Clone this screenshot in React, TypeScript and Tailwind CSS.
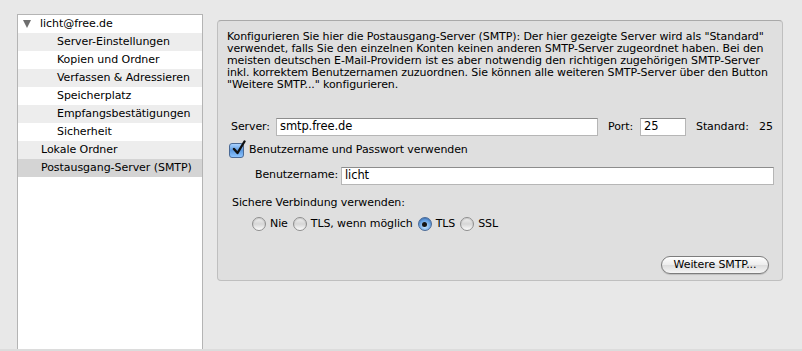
import React from "react";

const font = "font-['DejaVu_Sans','Liberation_Sans',sans-serif]";

const rows = [
  { label: "licht@free.de", level: 0, tree: true },
  { label: "Server-Einstellungen", level: 1 },
  { label: "Kopien und Ordner", level: 1 },
  { label: "Verfassen & Adressieren", level: 1 },
  { label: "Speicherplatz", level: 1 },
  { label: "Empfangsbestätigungen", level: 1 },
  { label: "Sicherheit", level: 1 },
  { label: "Lokale Ordner", level: 0 },
  { label: "Postausgang-Server (SMTP)", level: 0, selected: true },
];

const intro = [
  'Konfigurieren Sie hier die Postausgang-Server (SMTP): Der hier gezeigte Server wird als "Standard"',
  "verwendet, falls Sie den einzelnen Konten keinen anderen SMTP-Server zugeordnet haben. Bei den",
  "meisten deutschen E-Mail-Providern ist es aber notwendig den richtigen zugehörigen SMTP-Server",
  "inkl. korrektem Benutzernamen zuzuordnen. Sie können alle weiteren SMTP-Server über den Button",
  '"Weitere SMTP..." konfigurieren.',
];

function Sidebar() {
  return (
    <div className="ml-[17px] mt-[14px] flex w-[186px] flex-col border-x border-t border-[#b4b4b4] bg-white">
      {rows.map((r, i) => (
        <div
          key={r.label}
          className={
            "flex h-[18px] items-center whitespace-nowrap text-[11px] tracking-[-0.05px] text-black " +
            (r.selected ? "bg-[#d4d4d4] " : i % 2 === 1 ? "bg-[#ededed] " : "bg-white ") +
            (r.level === 1 ? "pl-[39px]" : "pl-[23px]")
          }
        >
          {r.tree && (
            <span className="-ml-[18px] mr-[9px] h-0 w-0 border-x-[4.5px] border-t-[8px] border-x-transparent border-t-[#6e6e6e]" />
          )}
          {r.label}
        </div>
      ))}
    </div>
  );
}

function TextInput({ value, className }: { value: string; className: string }) {
  return (
    <div
      className={
        "flex h-[18px] shrink-0 items-center border border-[#b6b6b6] border-t-[#8c8c8c] bg-white pl-[3px] text-[11.5px] text-black " +
        className
      }
    >
      {value}
    </div>
  );
}

function Radio({ checked, label }: { checked?: boolean; label: string }) {
  return (
    <div className="flex items-center gap-[4px]">
      <span
        className={
          "flex size-[14px] items-center justify-center rounded-full border shadow-[inset_0_1px_1px_rgba(0,0,0,0.15)] " +
          (checked
            ? "border-[#4a6a96] bg-[radial-gradient(circle_at_50%_70%,#c8e6ff,#6aa4e4_55%,#3a76c4)]"
            : "border-[#8e8e8e] bg-[linear-gradient(#f0f0f0,#d6d6d6_50%,#fcfcfc)]")
        }
      >
        {checked && <span className="size-[5px] rounded-full bg-[#151515]" />}
      </span>
      <span>{label}</span>
    </div>
  );
}

function Panel() {
  return (
    <div className="ml-[14px] mt-[20px] flex h-[261px] w-[566px] flex-col rounded-[4px] border border-[#bfbfbf] border-t-[#a9a9a9] bg-[#dfdfdf] text-[11px] tracking-[-0.1px] text-black">
      <div className="pl-[9px] pt-[10px] leading-[12px]">
        {intro.map((l) => (
          <div key={l} className="whitespace-nowrap">
            {l}
          </div>
        ))}
      </div>

      <div className="mt-[27px] flex items-center pl-[13px] whitespace-nowrap">
        <span className="w-[45px] shrink-0">Server:</span>
        <TextInput value="smtp.free.de" className="w-[322px]" />
        <span className="ml-[10px] w-[32px] shrink-0">Port:</span>
        <TextInput value="25" className="w-[46px]" />
        <span className="ml-[10px] w-[63px] shrink-0">Standard:</span>
        <span>25</span>
      </div>

      <div className="mt-[6px] flex items-center pl-[11px]">
        <span className="relative flex size-[15px] items-center justify-center rounded-[3px] border border-[#4a6a96] bg-[linear-gradient(#a9d2ff,#5d9ae0_50%,#8cc4ff)]">
          <svg viewBox="0 0 16 16" className="absolute -top-[4px] left-[1px] size-[16px]">
            <path d="M3 9 L6.5 13 L13.5 1.5" fill="none" stroke="#111" strokeWidth="2.4" strokeLinecap="round" strokeLinejoin="round" />
          </svg>
        </span>
        <span className="ml-[5px]">Benutzername und Passwort verwenden</span>
      </div>

      <div className="mt-[8px] flex items-center pl-[37px] whitespace-nowrap">
        <span className="w-[86px] shrink-0">Benutzername:</span>
        <TextInput value="licht" className="w-[433px]" />
      </div>

      <div className="mt-[10px] pl-[14px]">Sichere Verbindung verwenden:</div>

      <div className="mt-[5px] flex items-center gap-[5px] pl-[34px]">
        <Radio label="Nie" />
        <Radio label="TLS, wenn möglich" />
        <Radio label="TLS" checked />
        <Radio label="SSL" />
      </div>

      <div className="mt-auto flex justify-end pb-[6px] pr-[13px]">
        <button
          type="button"
          className="flex h-[18px] w-[108px] items-center justify-center rounded-full border border-[#7d7d7d] bg-[linear-gradient(#ffffff,#ececec_50%,#dcdcdc_51%,#f6f6f6)] text-[11px] text-black shadow-[0_1px_1px_rgba(0,0,0,0.15)]"
        >
          Weitere SMTP...
        </button>
      </div>
    </div>
  );
}

export default function App() {
  return (
    <div className={"flex h-[351px] w-[802px] flex-col overflow-hidden bg-[#e8e8e8] " + font}>
      <div className="flex h-[349px] items-start">
        <div className="flex h-full">
          <Sidebar />
        </div>
        <Panel />
      </div>
      <div className="h-[2px] bg-[#dcdcdc]" />
    </div>
  );
}
